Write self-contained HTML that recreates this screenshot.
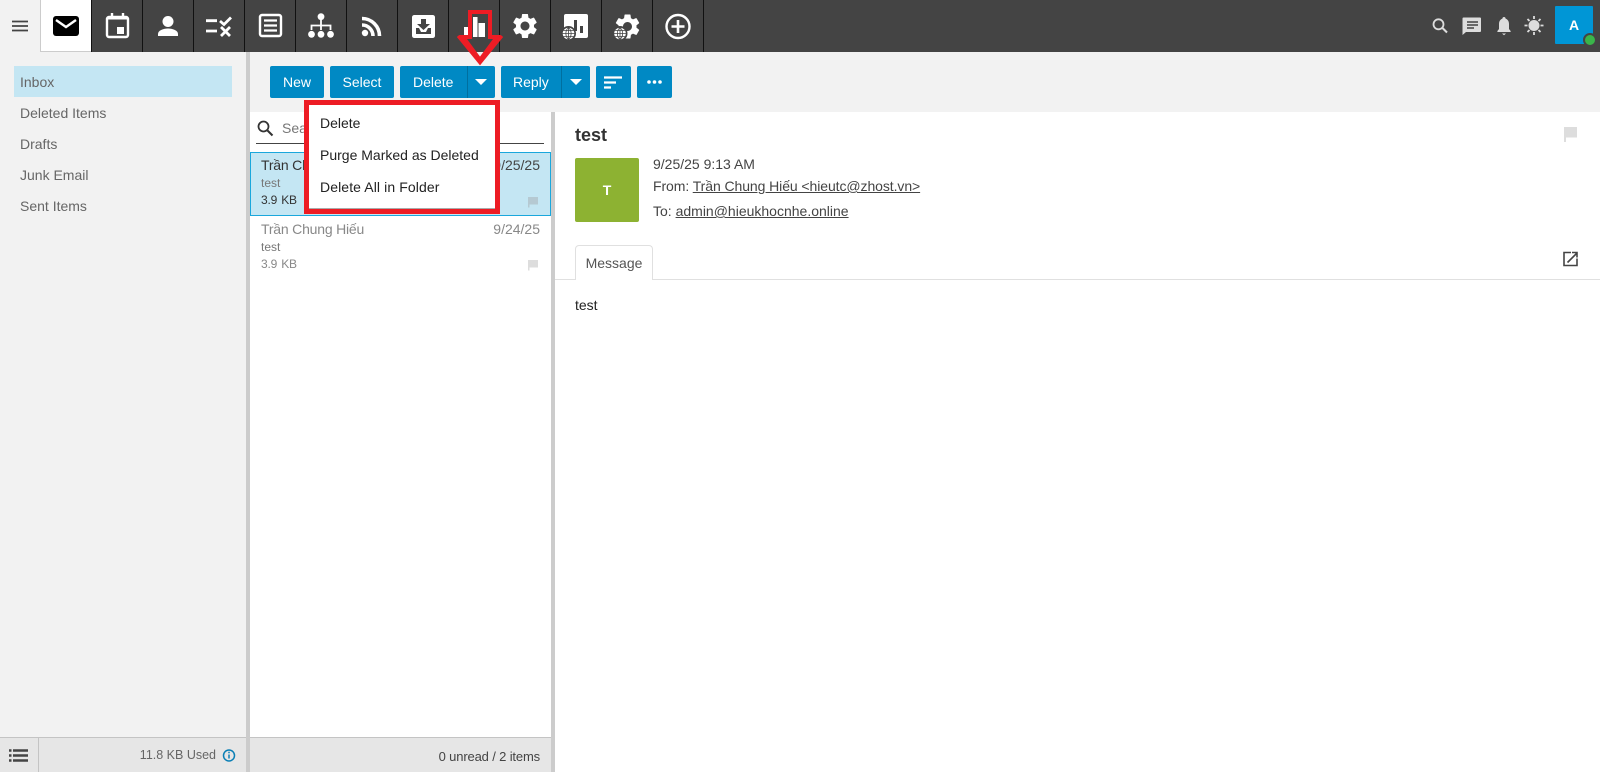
<!DOCTYPE html>
<html><head><meta charset="utf-8"><title>Mail</title>
<style>
html,body{margin:0;padding:0;width:1600px;height:772px;overflow:hidden;background:#fff;font-family:"Liberation Sans",sans-serif;font-size:14px;color:#333}
.a{position:absolute;white-space:nowrap}
.t{position:absolute;white-space:nowrap;line-height:20px;height:20px}
.sep{position:absolute;top:0;width:1px;height:52px;background:#111}
.btn{position:absolute;top:66px;height:32px;background:#0089c4;border-radius:2px;color:#fff;line-height:32px;text-align:center;font-size:14px}
.f{color:#666;left:20px}
svg{position:absolute;overflow:visible}
</style></head><body>
<div class="a" style="left:0;top:0;width:1600px;height:52px;background:#444"></div>
<div class="a" style="left:0;top:0;width:41px;height:52px;background:#f2f2f2"></div>
<div class="a" style="left:40px;top:0;width:51px;height:52px;background:#fff;border-left:1px solid #ccc;border-bottom:1px solid #ccc;box-sizing:border-box"></div>
<div class="sep" style="left:91px"></div><div class="sep" style="left:142px"></div><div class="sep" style="left:193px"></div><div class="sep" style="left:244px"></div><div class="sep" style="left:295px"></div><div class="sep" style="left:346px"></div><div class="sep" style="left:397px"></div><div class="sep" style="left:448px"></div><div class="sep" style="left:499px"></div><div class="sep" style="left:550px"></div><div class="sep" style="left:601px"></div><div class="sep" style="left:652px"></div><div class="sep" style="left:703px"></div>

<svg style="left:0;top:0" width="1600" height="52" viewBox="0 0 1600 52">
<path d="M12 21.500h16M12 26h16M12 30.500h16" stroke="#444" stroke-width="1.800" fill="none"/>
<rect x="53" y="16" width="26" height="20" rx="3" fill="#000"/><path d="M56 20l10 7 10-7" stroke="#fff" stroke-width="2.400" fill="none"/>
<rect x="107" y="17" width="21" height="20" rx="2" fill="none" stroke="#fff" stroke-width="2.400"/><path d="M107 18h21" stroke="#fff" stroke-width="3"/><path d="M112 13v5M123 13v5" stroke="#fff" stroke-width="2.400"/><rect x="117" y="27" width="7" height="7" fill="#fff"/>
<circle cx="168" cy="21.500" r="5.500" fill="#fff"/><path d="M158 36v-2c0-3.500 5-5.500 10-5.500s10 2 10 5.500v2z" fill="#fff"/>
<path d="M206 20.700h11M206 31h11" stroke="#fff" stroke-width="2.800" fill="none"/><path d="M220 21l4 3.500 7-7M221 27l9 9M230 27l-9 9" stroke="#fff" stroke-width="2.800" fill="none"/>
<rect x="260" y="15" width="21" height="21" rx="2" fill="none" stroke="#fff" stroke-width="2.400"/><path d="M264 20.500h13M264 25.500h13M264 30.500h13" stroke="#fff" stroke-width="2.200"/>
<circle cx="321" cy="16.700" r="3.400" fill="#fff"/><circle cx="311.500" cy="34.300" r="3.400" fill="#fff"/><circle cx="321" cy="34.300" r="3.400" fill="#fff"/><circle cx="330.500" cy="34.300" r="3.400" fill="#fff"/><path d="M321 20v10M311.500 30v-4.500h19v4.500" stroke="#fff" stroke-width="1.800" fill="none"/>
<circle cx="365" cy="33" r="3.200" fill="#fff"/><path d="M362 25a11 11 0 0 1 11 11M362 18.500a17.500 17.500 0 0 1 17.500 17.500" stroke="#fff" stroke-width="3.600" fill="none"/>
<path d="M414 15h19a2.500 2.500 0 0 1 2 2v19a2.500 2.500 0 0 1-2 2h-19a2.500 2.500 0 0 1-2-2V17a2.500 2.500 0 0 1 2-2z" fill="#fff"/><path d="M421 19h5v5h4l-6.500 6-6.500-6h4zM416 28h3l2 4h5l2-4h3v6h-15z" fill="#444"/>
<rect x="464" y="27" width="4.500" height="10" fill="#fff"/><rect x="473" y="17" width="4.500" height="20" fill="#fff"/><rect x="478.500" y="23" width="6.500" height="14" fill="#fff"/>
<path transform="translate(510 11) scale(1.250)" fill="#fff" d="M19.140 12.940c.04-.3.06-.61.06-.94 0-.32-.02-.64-.07-.94l2.030-1.580c.18-.14.23-.41.12-.61l-1.920-3.320c-.12-.22-.37-.29-.59-.22l-2.390.96c-.5-.38-1.030-.7-1.620-.94l-.36-2.540c-.04-.24-.24-.41-.48-.41h-3.840c-.24 0-.43.17-.47.41l-.36 2.540c-.59.24-1.130.57-1.620.94l-2.390-.96c-.22-.08-.47 0-.59.22L2.740 8.870c-.12.21-.08.47.12.61l2.030 1.580c-.05.3-.09.63-.09.94s.02.64.07.94l-2.030 1.580c-.18.14-.23.41-.12.61l1.920 3.320c.12.22.37.29.59.22l2.390-.96c.5.38 1.030.7 1.620.94l.36 2.540c.05.24.24.41.48.41h3.840c.24 0 .44-.17.47-.41l.36-2.540c.59-.24 1.130-.56 1.620-.94l2.390.96c.22.08.47 0 .59-.22l1.920-3.320c.12-.22.07-.47-.12-.61l-2.010-1.580zM12 15.600c-1.980 0-3.600-1.620-3.600-3.600s1.620-3.600 3.600-3.600 3.600 1.620 3.600 3.600-1.620 3.600-3.600 3.600z"/>
<rect x="564" y="14" width="24" height="24" rx="2" fill="#fff"/><rect x="574" y="20" width="3" height="11" fill="#444"/><rect x="580" y="26" width="3" height="7" fill="#444"/>
<g transform="translate(568.500 33.500)"><circle r="7.500" fill="#444"/><circle r="5.800" fill="#fff"/><path d="M-6 0h12M-5-3h10M-5 3h10M0-6v12M0-6c-3.500 3-3.500 9 0 12M0-6c3.500 3 3.500 9 0 12" stroke="#444" stroke-width=".8" fill="none"/></g>
<path transform="translate(612.500 11.500) scale(1.250)" fill="#fff" d="M19.140 12.940c.04-.3.06-.61.06-.94 0-.32-.02-.64-.07-.94l2.030-1.580c.18-.14.23-.41.12-.61l-1.920-3.320c-.12-.22-.37-.29-.59-.22l-2.390.96c-.5-.38-1.030-.7-1.620-.94l-.36-2.540c-.04-.24-.24-.41-.48-.41h-3.840c-.24 0-.43.17-.47.41l-.36 2.540c-.59.24-1.130.57-1.620.94l-2.390-.96c-.22-.08-.47 0-.59.22L2.740 8.870c-.12.21-.08.47.12.61l2.030 1.580c-.05.3-.09.63-.09.94s.02.64.07.94l-2.030 1.580c-.18.14-.23.41-.12.61l1.920 3.320c.12.22.37.29.59.22l2.390-.96c.5.38 1.030.7 1.620.94l.36 2.540c.05.24.24.41.48.41h3.840c.24 0 .44-.17.47-.41l.36-2.540c.59-.24 1.130-.56 1.620-.94l2.390.96c.22.08.47 0 .59-.22l1.920-3.320c.12-.22.07-.47-.12-.61l-2.010-1.580zM12 15.600c-1.980 0-3.600-1.620-3.600-3.600s1.620-3.600 3.600-3.600 3.600 1.620 3.600 3.600-1.620 3.600-3.600 3.600z"/>
<g transform="translate(620 33.500)"><circle r="7.500" fill="#444"/><circle r="5.800" fill="#fff"/><path d="M-6 0h12M-5-3h10M-5 3h10M0-6v12M0-6c-3.500 3-3.500 9 0 12M0-6c3.500 3 3.500 9 0 12" stroke="#444" stroke-width=".8" fill="none"/></g>
<circle cx="678" cy="26.500" r="11.500" fill="none" stroke="#fff" stroke-width="2.400"/><path d="M678 20v13M671.500 26.500h13" stroke="#fff" stroke-width="2.600"/>
<circle cx="1438.500" cy="24.300" r="5" fill="none" stroke="#ddd" stroke-width="1.800"/><path d="M1442.500 28l4.500 4.500" stroke="#ddd" stroke-width="2"/>
<path d="M1464 17.500h16a1 1 0 0 1 1 1v12.500a1 1 0 0 1-1 1h-14l-3.500 3V18.500a1 1 0 0 1 1-1z" fill="#ddd"/><path d="M1467 22h11M1467 25h11M1467 28h7" stroke="#444" stroke-width="1.400"/>
<path d="M1504 17c-1 0-1.600.7-1.600 1.600-2.400 1-3.400 3-3.400 5.400v5l-1.600 2v1h13.200v-1l-1.600-2v-5c0-2.400-1-4.400-3.400-5.400 0-.9-.6-1.600-1.600-1.600zM1502 33.500h4l-2 1.800z" fill="#ddd"/>
<circle cx="1534" cy="25.500" r="5.500" fill="#ddd"/><path d="M1534 16v3M1534 32v3M1524.500 25.500h3M1540.500 25.500h3M1527.500 19l2 2M1538.500 30l2 2M1527.500 32l2-2M1538.500 21l2-2" stroke="#ddd" stroke-width="1.800"/>
</svg>
<div class="a" style="left:1555px;top:6px;width:38px;height:38px;background:#0096d6;border-radius:1px;color:#fff;font-weight:bold;font-size:14px;line-height:38px;text-align:center">A</div>
<div class="a" style="left:1583px;top:33px;width:14px;height:14px;border-radius:50%;background:#3ab54a;border:2px solid #444;box-sizing:border-box"></div>

<div class="a" style="left:0;top:52px;width:246px;height:720px;background:#f2f2f2"></div>
<div class="a" style="left:246px;top:52px;width:4px;height:720px;background:#ccc"></div>
<div class="a" style="left:14px;top:66px;width:218px;height:31px;background:#c4e6f3"></div>
<div class="t f" style="top:72px">Inbox</div>
<div class="t f" style="top:103px">Deleted Items</div>
<div class="t f" style="top:134px">Drafts</div>
<div class="t f" style="top:165px">Junk Email</div>
<div class="t f" style="top:196px">Sent Items</div>

<div class="a" style="left:250px;top:52px;width:1350px;height:60px;background:#f2f2f2"></div>
<div class="btn" style="left:270px;width:54px">New</div>
<div class="btn" style="left:330px;width:64px">Select</div>
<div class="btn" style="left:400px;width:95px;text-align:left;text-indent:13px">Delete</div>
<div class="a" style="left:467px;top:66px;width:1px;height:32px;background:#006f9f"></div>
<div class="btn" style="left:501px;width:89px;text-align:left;text-indent:12px">Reply</div>
<div class="a" style="left:561px;top:66px;width:1px;height:32px;background:#006f9f"></div>
<div class="btn" style="left:596px;width:35px"></div>
<div class="btn" style="left:637px;width:35px"></div>
<svg style="left:0;top:0" width="1600" height="110">
<path d="M475 79h12l-6 6zM570 79h12l-6 6z" fill="#fff"/>
<path d="M604 77.500h18M604 82.500h12M604 87.500h7" stroke="#fff" stroke-width="2.200"/>
<circle cx="649" cy="82" r="1.800" fill="#fff"/><circle cx="654.500" cy="82" r="1.800" fill="#fff"/><circle cx="660" cy="82" r="1.800" fill="#fff"/>
</svg>

<div class="a" style="left:250px;top:112px;width:301px;height:625px;background:#fff"></div>
<div class="a" style="left:551px;top:112px;width:4px;height:660px;background:#ccc"></div>
<svg style="left:0;top:0" width="560" height="150"><circle cx="263.500" cy="126.500" r="5" fill="none" stroke="#333" stroke-width="1.800"/><path d="M267.500 130.500l5 5" stroke="#333" stroke-width="2"/></svg>
<div class="t" style="left:282px;top:118px;color:#777">Sea</div>
<div class="a" style="left:256px;top:143px;width:288px;height:1px;background:#444"></div>

<div class="a" style="left:250px;top:152px;width:301px;height:64px;background:#c4e6f3;border:1px solid #1aa7dc;box-sizing:border-box"></div>
<div class="t" style="left:261px;top:155px;color:#333;letter-spacing:-.2px">Trần Chung Hiếu</div>
<div class="t" style="right:1060px;top:155px;color:#444">9/25/25</div>
<div class="t" style="left:261px;top:173px;font-size:12px;color:#777">test</div>
<div class="t" style="left:261px;top:190px;font-size:12px;color:#333;letter-spacing:-.2px;word-spacing:1px">3.9 KB</div>
<div class="t" style="left:261px;top:219px;color:#888;letter-spacing:-.2px">Trần Chung Hiếu</div>
<div class="t" style="right:1060px;top:219px;color:#888">9/24/25</div>
<div class="t" style="left:261px;top:237px;font-size:12px;color:#777">test</div>
<div class="t" style="left:261px;top:254px;font-size:12px;color:#888;letter-spacing:-.2px;word-spacing:1px">3.9 KB</div>
<svg style="left:0;top:0" width="1600" height="300">
<path d="M528 197h10v7.500h-8.500v3H528z" fill="#b5c9d2"/>
<path d="M528 260h10v7.500h-8.500v3H528z" fill="#ddd"/>
<path d="M1564 127h13v10.500h-11v4.500h-2z" fill="#ddd"/>
<path d="M1571 252.500h-7v13h13v-7" fill="none" stroke="#444" stroke-width="1.600"/><path d="M1567.500 262.500l9-9M1572 252.500h5v5" fill="none" stroke="#444" stroke-width="1.600"/>
</svg>

<div class="a" style="left:304px;top:100px;width:196px;height:114px;background:#fff;border:5px solid #ed1c24;box-sizing:border-box"></div>
<div class="a" style="left:309px;top:208px;width:186px;height:1px;background:#aaa"></div>
<div class="t" style="left:320px;top:113px;color:#222">Delete</div>
<div class="t" style="left:320px;top:145px;color:#222">Purge Marked as Deleted</div>
<div class="t" style="left:320px;top:177px;color:#222;letter-spacing:.1px">Delete All in Folder</div>
<svg style="left:0;top:0" width="600" height="70"><path d="M470 12H490V37H497L480 60L463 37H470Z M470 37L462 37" fill="none" stroke="#ed1c24" stroke-width="4"/><path d="M458 36L480 63L502 36" fill="none" stroke="#ed1c24" stroke-width="3"/></svg>

<div class="t" style="left:575px;top:125px;font-size:18px;font-weight:bold;color:#333">test</div>
<div class="a" style="left:575px;top:158px;width:64px;height:64px;background:#8db232;border-radius:2px;color:#fff;font-weight:bold;font-size:14px;line-height:64px;text-align:center">T</div>
<div class="t" style="left:653px;top:154px;color:#444">9/25/25 9:13 AM</div>
<div class="t" style="left:653px;top:176px;color:#444;letter-spacing:-.08px">From: <span style="text-decoration:underline">Trần Chung Hiếu &lt;hieutc@zhost.vn&gt;</span></div>
<div class="t" style="left:653px;top:201px;color:#444">To: <span style="text-decoration:underline">admin@hieukhocnhe.online</span></div>
<div class="a" style="left:555px;top:279px;width:1045px;height:1px;background:#e0e0e0"></div>
<div class="a" style="left:575px;top:245px;width:78px;height:35px;background:#fff;border:1px solid #e0e0e0;border-bottom:none;border-radius:4px 4px 0 0;box-sizing:border-box;line-height:34px;text-align:center;color:#555">Message</div>
<div class="t" style="left:575px;top:295px;color:#222">test</div>

<div class="a" style="left:0;top:737px;width:246px;height:35px;background:#e6e6e6;border-top:1px solid #c4c4c4;box-sizing:border-box"></div>
<div class="a" style="left:38px;top:737px;width:1px;height:35px;background:#c4c4c4"></div>
<div class="a" style="left:250px;top:737px;width:301px;height:35px;background:#e6e6e6;border-top:1px solid #c4c4c4;box-sizing:border-box"></div>
<svg style="left:0;top:730px" width="260" height="42">
<path d="M13 20.500h15M13 25.500h15M13 30.500h15M9 20.500h2.500M9 25.500h2.500M9 30.500h2.500" stroke="#444" stroke-width="2.400"/>
<circle cx="229" cy="25.500" r="5.500" fill="none" stroke="#0a7fb5" stroke-width="1.500"/><path d="M229 24.500v4M229 21.800v1.400" stroke="#0a7fb5" stroke-width="1.500"/>
</svg>
<div class="t" style="right:1384px;top:745px;color:#666;font-size:12.500px">11.8 KB Used</div>
<div class="t" style="right:1060px;top:747px;color:#444;font-size:13px;letter-spacing:-.15px">0 unread / 2 items</div>
</body></html>
